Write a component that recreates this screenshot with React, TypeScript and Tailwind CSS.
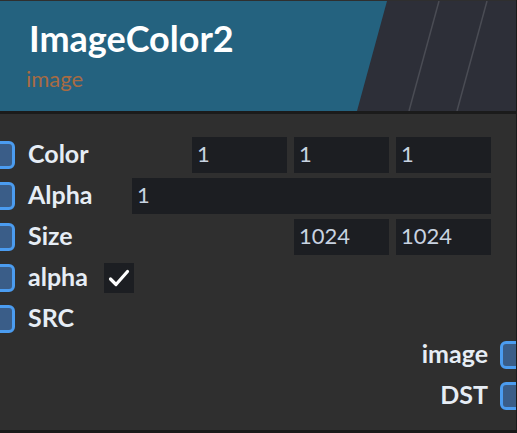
import React from "react";

const font = { fontFamily: "Lato, 'Noto Sans', sans-serif" };

function SocketL() {
  return <div className="w-[22px] h-[28px] -ml-[7px] shrink-0 rounded-[6px] border-[3px] border-[#4b9cf0] bg-[#3a5d88]" />;
}
function SocketR() {
  return <div className="w-[22px] h-[28px] -mr-[6px] shrink-0 rounded-[6px] border-[3px] border-[#4b9cf0] bg-[#3a5d88]" />;
}
function Input({ v, w = "w-[95px]" }: { v: string; w?: string }) {
  return (
    <div className={`${w} h-[36px] bg-[#1c1e22] flex items-center pl-[5px] pb-[3px] text-[22px] leading-none text-[#c8d3e1]`}>{v}</div>
  );
}
function Label({ t }: { t: string }) {
  return <span className="ml-[13px] -mt-[3px] text-[25px] font-bold text-[#e6edf5] leading-none">{t}</span>;
}

export default function App() {
  return (
    <div className="w-[517px] h-[433px] bg-[#1a1a1a]" style={font}>
      <div className="w-[516px] h-[430px] pt-[1px] overflow-hidden flex flex-col bg-[#2f2f2f]">
        <div className="relative h-[110px] bg-[#2d2f38] shrink-0">
          <svg className="absolute inset-0" width="516" height="110" viewBox="0 0 516 110">
            <polygon points="0,0 387,0 357,110 0,110" fill="#24627f" />
            <line x1="439" y1="0" x2="409" y2="110" stroke="#4a4c54" strokeWidth="1.5" />
            <line x1="487" y1="0" x2="457" y2="110" stroke="#4a4c54" strokeWidth="1.5" />
          </svg>
          <div className="relative pl-[29px] pt-[19px]">
            <div className="text-[36px] font-bold text-white leading-none">ImageColor2</div>
            <div className="ml-[-3px] mt-[12px] text-[22px] text-[#a86b43] leading-none">image</div>
          </div>
        </div>
        <div className="h-[3px] bg-[#1b1b1b] shrink-0" />
        <div className="flex flex-col pt-[23px] pr-[25px]">
          <div className="flex items-center h-[36px]">
            <SocketL />
            <Label t="Color" />
            <div className="flex-1" />
            <div className="flex gap-[7px]">
              <Input v="1" />
              <Input v="1" />
              <Input v="1" />
            </div>
          </div>
          <div className="flex items-center h-[36px] mt-[5px]">
            <SocketL />
            <Label t="Alpha" />
            <div className="flex-1" />
            <Input v="1" w="w-[359px]" />
          </div>
          <div className="flex items-center h-[36px] mt-[5px]">
            <SocketL />
            <Label t="Size" />
            <div className="flex-1" />
            <div className="flex gap-[7px]">
              <Input v="1024" />
              <Input v="1024" />
            </div>
          </div>
          <div className="flex items-center h-[36px] mt-[5px]">
            <SocketL />
            <Label t="alpha" />
            <div className="ml-[16px] w-[30px] h-[30px] bg-[#1c1e22] flex items-center justify-center">
              <svg width="22" height="18" viewBox="0 0 22 18">
                <path d="M2.5 10 L8 15.5 L19.5 2.5" fill="none" stroke="white" strokeWidth="3.2" strokeLinecap="round" strokeLinejoin="round" />
              </svg>
            </div>
          </div>
          <div className="flex items-center h-[36px] mt-[5px]">
            <SocketL />
            <Label t="SRC" />
          </div>
        </div>
        <div className="flex flex-col items-end pt-[0px]">
          <div className="flex items-center h-[36px]">
            <span className="text-[25px] -mt-[3px] font-bold text-[#e6edf5] leading-none mr-[12px]">image</span>
            <SocketR />
          </div>
          <div className="flex items-center h-[36px] mt-[5px]">
            <span className="text-[25px] -mt-[3px] font-bold text-[#e6edf5] leading-none mr-[12px]">DST</span>
            <SocketR />
          </div>
        </div>
      </div>
    </div>
  );
}
